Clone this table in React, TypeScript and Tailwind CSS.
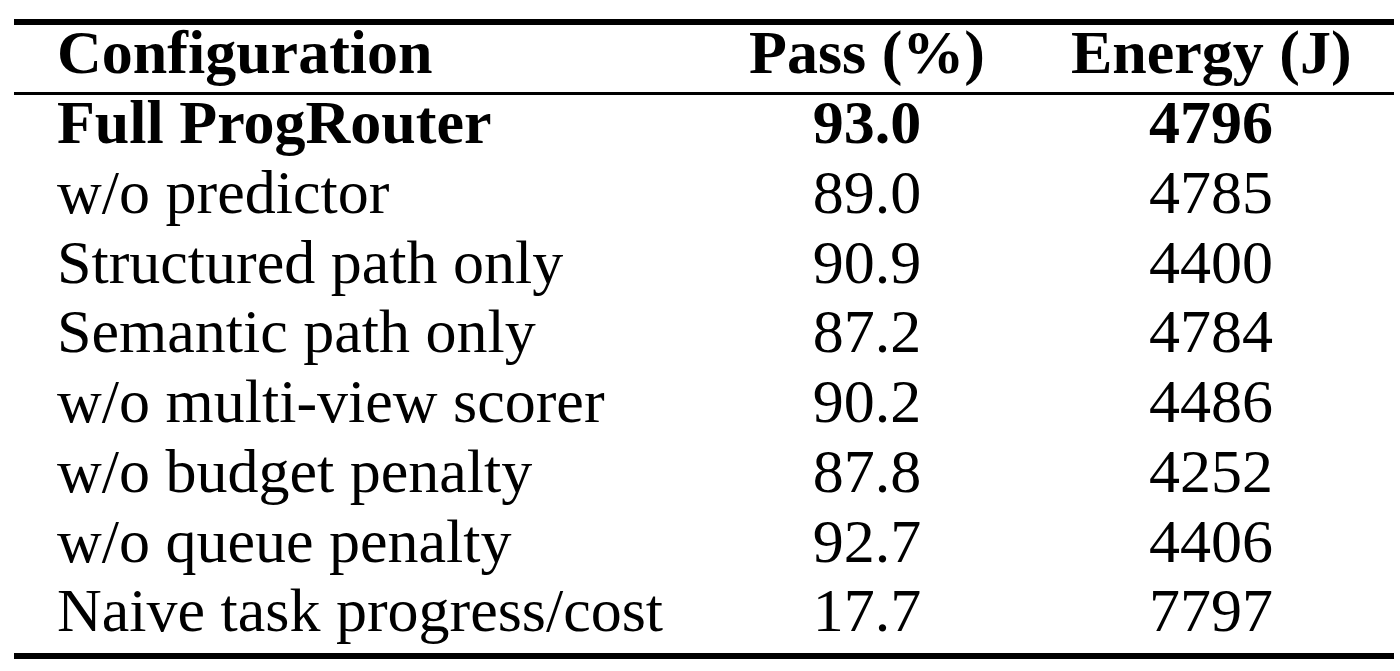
const rows = [
  { name: "Full ProgRouter", pass: "93.0", energy: "4796", bold: true },
  { name: "w/o predictor", pass: "89.0", energy: "4785" },
  { name: "Structured path only", pass: "90.9", energy: "4400" },
  { name: "Semantic path only", pass: "87.2", energy: "4784" },
  { name: "w/o multi-view scorer", pass: "90.2", energy: "4486" },
  { name: "w/o budget penalty", pass: "87.8", energy: "4252" },
  { name: "w/o queue penalty", pass: "92.7", energy: "4406" },
  { name: "Naive task progress/cost", pass: "17.7", energy: "7797" },
];

const App = () => {
  return (
    <div className="min-h-screen bg-white pt-[19px] text-black font-['Liberation_Serif','Times_New_Roman',serif] text-[62px] leading-[54px]">
      <div className="ml-[14px] w-[1380px] border-y-[6px] border-black">
        <div className="grid h-[70px] grid-cols-[692px_322px_366px] border-b-[3px] border-black font-bold">
          <div className="px-[43px]">Configuration</div>
          <div className="px-[43px] text-center whitespace-nowrap">Pass (%)</div>
          <div className="px-[43px] text-center whitespace-nowrap">Energy (J)</div>
        </div>
        {rows.map((row) => (
          <div
            key={row.name}
            className={`grid h-[69.75px] grid-cols-[692px_322px_366px] ${row.bold ? "font-bold" : "font-normal"}`}
          >
            <div className="px-[43px] whitespace-nowrap">{row.name}</div>
            <div className="px-[43px] text-center">{row.pass}</div>
            <div className="px-[43px] text-center">{row.energy}</div>
          </div>
        ))}
      </div>
    </div>
  );
};

export default App;
